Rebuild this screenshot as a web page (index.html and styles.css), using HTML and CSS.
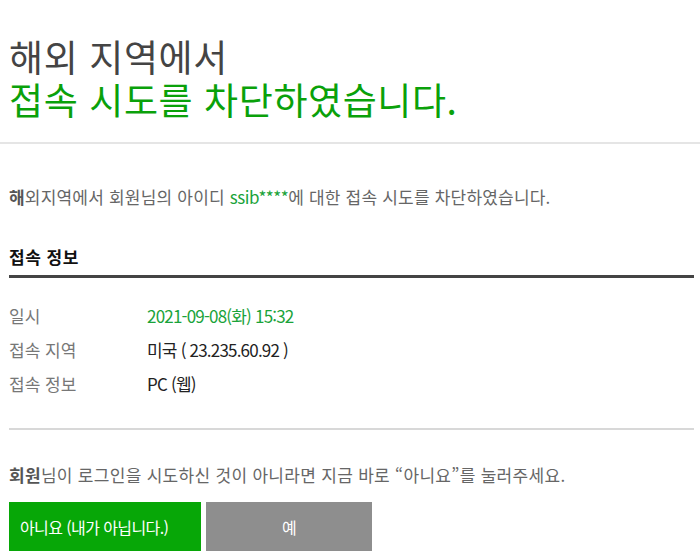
FILE: index.html
```html
<!DOCTYPE html>
<html lang="ko">
<head>
  <meta charset="UTF-8" />
  <meta name="viewport" content="width=device-width, initial-scale=1.0" />
  <title>해외 지역 접속 차단</title>
  <link rel="stylesheet" href="styles.css">
</head>
<body>
  <div class="header">
    <h1>
      <div>해외 지역에서</div>
      <div class="green">접속 시도를 차단하였습니다.</div>
    </h1>
  </div>

  <div class="content">
    <p class="intro"><b>해</b>외지역에서 회원님의 아이디 <span class="id">ssib****</span>에 대한 접속 시도를 차단하였습니다.</p>

    <h2>접속 정보</h2>
    <table class="info">
      <tr>
        <th>일시</th>
        <td class="date">2021-09-08(화) 15:32</td>
      </tr>
      <tr>
        <th>접속 지역</th>
        <td>미국 ( 23.235.60.92 )</td>
      </tr>
      <tr>
        <th>접속 정보</th>
        <td>PC (웹)</td>
      </tr>
    </table>

    <p class="notice"><b>회원</b>님이 로그인을 시도하신 것이 아니라면 지금 바로 “아니요”를 눌러주세요.</p>

    <div class="buttons">
      <button type="button" class="btn-no">아니요 (내가 아닙니다.)</button>
      <button type="button" class="btn-yes">예</button>
    </div>
  </div>
</body>
</html>
```

FILE: styles.css
```css
body {
  margin: 0;
  font-family: 'Noto Sans CJK KR', 'Noto Sans', sans-serif;
  background: #fff;
  color: #666;
}
.header {
  height: 144px;
  border-bottom: 2px solid #e5e5e5;
  box-sizing: border-box;
  padding: 35px 9px 0;
}
h1 {
  margin: 0;
  font-size: 37px;
  font-weight: 400;
  line-height: 43px;
  color: #444;
  letter-spacing: 0.6px;
}
h1 div {
  height: 43px;
}
.green {
  color: #0aa10a;
}
.content {
  margin: 0 6px 0 9px;
}
.intro {
  margin: 0;
  padding-top: 41px;
  font-size: 17px;
  line-height: 24px;
  letter-spacing: 0.2px;
}
.intro b, .notice b {
  color: #555;
}
.id {
  color: #1aa33a;
  letter-spacing: -0.5px;
}
h2 {
  margin: 37px 0 0;
  padding-bottom: 7px;
  font-size: 17px;
  line-height: 22px;
  color: #111;
  letter-spacing: 0.5px;
  border-bottom: 3px solid #444;
}
.info {
  border-collapse: collapse;
  margin-top: 20px;
  font-size: 17px;
}
.info th {
  width: 138px;
  padding: 0;
  text-align: left;
  font-weight: 400;
  color: #777;
  height: 34px;
}
.info td {
  padding: 0;
  color: #222;
  letter-spacing: -0.8px;
}
.info td.date {
  color: #1aa33a;
}
.notice {
  margin: 28px 0 0;
  padding-top: 33px;
  border-top: 2px solid #d8d8d8;
  font-size: 17px;
  line-height: 24px;
  letter-spacing: 0.3px;
}
.buttons {
  display: flex;
  gap: 5px;
  margin-top: 15px;
}
button {
  height: 49px;
  border: none;
  color: #fff;
  font-family: inherit;
  font-size: 16px;
  letter-spacing: -0.6px;
  cursor: pointer;
}
.btn-no {
  width: 192px;
  padding: 0 11px;
  text-align: left;
  background: #07a707;
}
.btn-yes {
  width: 166px;
  background: #8e8e8e;
}
```
